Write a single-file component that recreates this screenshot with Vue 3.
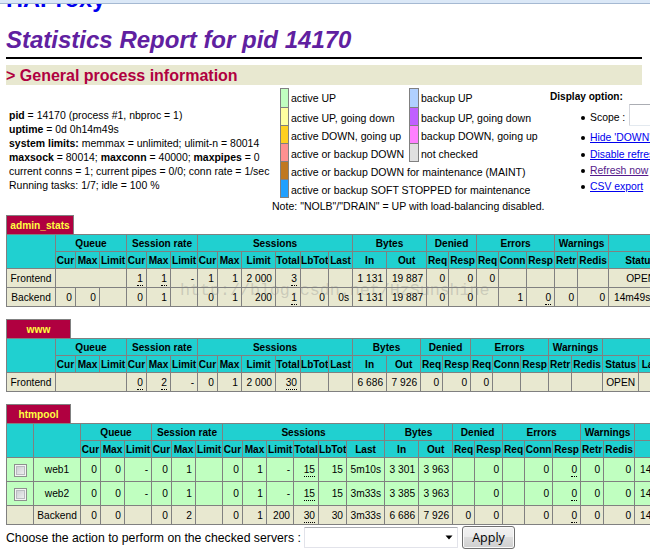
<script setup>
const info = [
  [['b', 'pid'], ['t', ' = 14170 (process #1, nbproc = 1)']],
  [['b', 'uptime'], ['t', ' = 0d 0h14m49s']],
  [['b', 'system limits:'], ['t', ' memmax = unlimited; ulimit-n = 80014']],
  [['b', 'maxsock'], ['t', ' = 80014; '], ['b', 'maxconn'], ['t', ' = 40000; '], ['b', 'maxpipes'], ['t', ' = 0']],
  [['t', 'current conns = 1; current pipes = 0/0; conn rate = 1/sec']],
  [['t', 'Running tasks: 1/7; idle = 100 %']],
]

const legend = [
  ['active3', 'active UP', 'backup3', 'backup UP'],
  ['active2', 'active UP, going down', 'backup2', 'backup UP, going down'],
  ['active1', 'active DOWN, going up', 'backup1', 'backup DOWN, going up'],
  ['active0', 'active or backup DOWN', 'nocheck', 'not checked'],
  ['maint', 'active or backup DOWN for maintenance (MAINT)'],
  ['soft', 'active or backup SOFT STOPPED for maintenance'],
]

const groups = [
  ['Queue', 3], ['Session rate', 3], ['Sessions', 6], ['Bytes', 2],
  ['Denied', 2], ['Errors', 3], ['Warnings', 2],
]
const heads = [
  'Cur', 'Max', 'Limit', 'Cur', 'Max', 'Limit', 'Cur', 'Max', 'Limit', 'Total', 'LbTot', 'Last',
  'In', 'Out', 'Req', 'Resp', 'Req', 'Conn', 'Resp', 'Retr', 'Redis', 'Status',
]

const proxies = [
  {
    name: 'admin_stats',
    cols: [49, 20, 24, 27, 20, 24, 27, 20, 24, 34, 25, 28, 24, 34, 40, 22, 28, 22, 28, 28, 23, 31, 64],
    rows: [
      { type: 'frontend', name: 'Frontend', cells: ['_1', '_1', '-', '1', '1', '2 000', '_3', '', '', '1 131', '19 887', '0', '0', '0', '', '', '', '', 'OPEN'] },
      { type: 'backend', name: 'Backend', cells: ['0', '0', '', '0', '1', '', '0', '1', '200', '_1', '0', '0s', '1 131', '19 887', '0', '0', '', '1', '_0', '0', '0', '14m49s UP'] },
    ],
  },
  {
    name: 'www',
    cols: [49, 20, 24, 27, 20, 24, 27, 20, 24, 34, 25, 28, 24, 34, 34, 22, 28, 22, 28, 28, 23, 31, 36, 46],
    extra: ['LastChk'],
    rows: [
      { type: 'frontend', name: 'Frontend', cells: ['_0', '_2', '-', '0', '1', '2 000', '_30', '', '', '6 686', '7 926', '0', '0', '0', '', '', '', '', 'OPEN', ''] },
    ],
  },
  {
    name: 'htmpool',
    check: true,
    cols: [27, 47, 20, 24, 27, 20, 24, 27, 20, 24, 27, 25, 28, 38, 34, 34, 22, 28, 22, 28, 28, 23, 31, 64],
    rows: [
      { type: 'server', name: 'web1', cells: ['0', '0', '-', '0', '1', '', '0', '1', '-', '_15', '15', '5m10s', '3 301', '3 963', '', '0', '', '0', '_0', '0', '0', '14m49s UP'] },
      { type: 'server', name: 'web2', cells: ['0', '0', '-', '0', '1', '', '0', '1', '-', '_15', '15', '3m33s', '3 385', '3 963', '', '0', '', '0', '_0', '0', '0', '14m49s UP'] },
      { type: 'backend', name: 'Backend', cells: ['0', '0', '', '0', '2', '', '0', '1', '200', '_30', '30', '3m33s', '6 686', '7 926', '0', '0', '', '0', '_0', '0', '0', '14m49s UP'] },
    ],
  },
]

const sum = (list) => list.reduce((a, b) => a + b, 0)
const isState = (c) => c === 'OPEN' || c.endsWith('UP')
</script>

<template>
  <div class="page">
    <div class="chrome"></div>
    <main>
      <h1>HAProxy</h1>
      <h2>Statistics Report for pid 14170</h2>
      <hr />
      <h3>&gt; General process information</h3>

      <section class="general">
        <div class="info">
          <p v-for="(line, i) in info" :key="i"><template v-for="(part, j) in line" :key="j"><b v-if="part[0] === 'b'">{{ part[1] }}</b><span v-else>{{ part[1] }}</span></template></p>
        </div>

        <div class="legend">
          <div v-for="(row, i) in legend" :key="i" class="legend-row">
            <i class="swatch" :class="row[0]"></i>
            <span class="legend-text" :class="{ wide: !row[2] }">{{ row[1] }}</span>
            <template v-if="row[2]">
              <i class="swatch second" :class="row[2]"></i>
              <span class="legend-text">{{ row[3] }}</span>
            </template>
          </div>
          <p class="note">Note: "NOLB"/"DRAIN" = UP with load-balancing disabled.</p>
        </div>

        <div class="options">
          <b>Display option:</b>
          <ul>
            <li class="scope">Scope : <input type="text" /></li>
            <li><a href="#">Hide 'DOWN' servers</a></li>
            <li><a href="#">Disable refresh</a></li>
            <li><a href="#" class="visited">Refresh now</a></li>
            <li><a href="#">CSV export</a></li>
          </ul>
        </div>
      </section>

      <section v-for="p in proxies" :key="p.name" class="proxy">
        <div class="pxname" :class="{ long: p.name.length > 8 }">{{ p.name }}</div>
        <table :style="{ width: sum(p.cols) + 1 + 'px' }">
          <colgroup>
            <col v-for="(w, i) in p.cols" :key="i" :style="{ width: w + 'px' }" />
          </colgroup>
          <thead>
            <tr>
              <th v-if="p.check" rowspan="2"></th>
              <th rowspan="2"></th>
              <th v-for="g in groups" :key="g[0]" :colspan="g[1]">{{ g[0] }}</th>
              <th :colspan="p.extra ? 2 : 1"></th>
            </tr>
            <tr>
              <th v-for="(h, i) in heads" :key="i">{{ h }}</th>
              <th v-for="h in p.extra" :key="h">{{ h }}</th>
            </tr>
          </thead>
          <tbody>
            <tr v-for="row in p.rows" :key="row.name" :class="row.type">
              <td v-if="p.check" class="ac"><input v-if="row.type === 'server'" type="checkbox" /></td>
              <td class="ac">{{ row.name }}</td>
              <td v-if="row.type === 'frontend'" colspan="3"></td>
              <td v-for="(c, i) in row.cells" :key="i" :class="{ ac: isState(c) }">
                <u v-if="c[0] === '_'">{{ c.slice(1) }}</u>
                <template v-else>{{ c }}</template>
              </td>
            </tr>
          </tbody>
        </table>
      </section>

      <form class="action" @submit.prevent>
        <label>Choose the action to perform on the checked servers :</label>
        <div class="select">
          <svg width="8" height="5" viewBox="0 0 8 5"><path d="M0.5 0.5h7L4 4.5z" fill="#000" /></svg>
        </div>
        <button>Apply</button>
      </form>
    </main>
    <div class="watermark">http://blog.csdn.net/HzSunshine</div>
  </div>
</template>

<style>
body {
  margin: 0;
  background: #fff;
}
</style>

<style scoped>
.page {
  position: relative;
  width: 650px;
  height: 559px;
  overflow: hidden;
  background: #fff;
  color: #000;
  font-family: "Liberation Sans", Arial, sans-serif;
  font-size: 10.4px;
}

.chrome {
  position: relative;
  z-index: 1;
  box-sizing: border-box;
  height: 4px;
  background: #dbe8f7;
  border-bottom: 1px solid #a5b9d2;
}

main {
  padding-left: 6px;
}

p, h1, h2, h3, ul {
  margin: 0;
  padding: 0;
}

h1 {
  margin-top: -19px;
  font-size: 23.5px;
  line-height: 28px;
  color: #0000ee;
}

h2 {
  margin-top: 13px;
  font-size: 24px;
  line-height: 28px;
  font-style: italic;
  color: #6020a0;
}

hr {
  width: 636px;
  height: 2px;
  margin: 3px 0 6px;
  border: 0;
  background: #000;
}

h3 {
  box-sizing: border-box;
  width: 636px;
  height: 20px;
  padding-top: 1px;
  font-size: 16px;
  line-height: 20px;
  color: #b00040;
  background: #e8e8d0;
}

.general {
  display: flex;
  width: 760px;
  height: 130px;
}

.info {
  width: 263px;
  padding: 24px 0 0 3px;
  font-size: 10.48px;
  line-height: 14px;
  white-space: pre;
}

.legend {
  width: 278px;
  padding-top: 3px;
  font-size: 10.55px;
  white-space: nowrap;
}

.legend-row {
  display: flex;
  height: 18px;
  margin-left: 8px;
  line-height: 22px;
}

.legend-row:first-child {
  height: 19px;
  line-height: 21px;
}

.swatch {
  box-sizing: border-box;
  width: 9px;
  height: calc(100% + 1px);
  border: 1px solid #808080;
}

.swatch.second {
  width: 10px;
}

.legend-text {
  width: 118px;
  padding-left: 2px;
}

.legend-text.wide {
  width: auto;
}

.active3 { background: #c0ffc0; }
.active2 { background: #ffffa0; }
.active1 { background: #ffd020; }
.active0 { background: #ff9090; }
.maint { background: #c07820; }
.soft { background: #20a0ff; }
.backup3 { background: #b0d0ff; }
.backup2 { background: #c060ff; }
.backup1 { background: #ff80ff; }
.nocheck { background: #e0e0e0; }

.note {
  line-height: 18px;
}

.options {
  padding-top: 5px;
  line-height: 14px;
  white-space: nowrap;
}

.options b {
  font-size: 10.1px;
}

.options ul {
  margin-top: 1px;
  padding-left: 40px;
  list-style: none;
}

.options li {
  display: flex;
  align-items: center;
  height: 16.4px;
}

.options li::before {
  content: "";
  width: 4px;
  height: 4px;
  margin: 0 5px 0 -9px;
  border-radius: 50%;
  background: #000;
}

.options li.scope {
  height: 25px;
  padding-top: 0;
}

.scope input {
  box-sizing: border-box;
  width: 120px;
  height: 22px;
  margin: 0 0 5px 4px;
  border: 1px solid #e3e9ef;
  border-top-color: #abadb3;
  border-left-color: #d4d6dc;
  border-radius: 1px;
}

.options a {
  color: #0000ee;
}

.options a.visited {
  color: #551a8b;
}

.proxy {
  margin-bottom: 12px;
}

.pxname {
  box-sizing: border-box;
  width: 65px;
  height: 19px;
  border: 1px solid #808080;
  border-bottom: 0;
  background: #b00040;
  color: #ffff40;
  font-size: 10.2px;
  font-weight: bold;
  line-height: 20px;
  text-align: center;
}

.pxname.long {
  width: 68px;
}

table {
  table-layout: fixed;
  border-collapse: separate;
  border-spacing: 0;
  border: solid #808080;
  border-width: 1px 0 0 1px;
  box-sizing: border-box;
}

th, td {
  box-sizing: border-box;
  height: 17px;
  padding: 2px 0 0;
  border: solid #808080;
  border-width: 0 1px 1px 0;
  overflow: hidden;
  line-height: 14px;
  white-space: nowrap;
}

th {
  background: #20d0d0;
  font-size: 10.1px;
  text-align: center;
}

td {
  height: 19px;
  padding-right: 3px;
  font-size: 10.2px;
  text-align: right;
}

td.ac {
  padding-right: 0;
  text-align: center;
}

.frontend td, .backend td {
  background: #e8e8d0;
}

.server td {
  height: 24px;
  padding-top: 1px;
  background: #c0ffc0;
}

td u {
  padding-bottom: 1px;
  border-bottom: 1px dotted #000;
  text-decoration: none;
}

input[type="checkbox"] {
  appearance: none;
  box-sizing: border-box;
  display: block;
  width: 13px;
  height: 13px;
  margin: 0 auto;
  border: 1px solid #8e8f8f;
  background: linear-gradient(135deg, #c4c8cc, #f6f6f6);
  box-shadow: inset 0 0 0 1px #f4f4f4, inset 0 0 0 2px #b9bcc0;
}

.action {
  display: flex;
  align-items: flex-start;
  margin-top: -11px;
  font-size: 12.25px;
}

.action label {
  width: 298px;
  line-height: 25px;
  white-space: nowrap;
}

.select {
  box-sizing: border-box;
  display: flex;
  align-items: center;
  justify-content: flex-end;
  width: 154px;
  height: 21px;
  margin: 1px 4px 0 0;
  padding-right: 4px;
  border: 1px solid #e2e3ea;
  border-top-color: #abadb3;
  border-radius: 1px;
}

button {
  box-sizing: border-box;
  width: 53px;
  height: 23px;
  padding: 0;
  border: 1px solid #707070;
  border-radius: 3px;
  background: linear-gradient(#f2f2f2, #ebebeb 50%, #dddddd 50%, #cfcfcf);
  box-shadow: inset 0 0 0 1px #fafafa;
  color: #000;
  font: 12.5px/20px "Open Sans", "Noto Sans", sans-serif;
}

.watermark {
  position: absolute;
  left: 180px;
  top: 279px;
  color: rgba(130, 130, 130, 0.3);
  font-family: "Liberation Mono", monospace;
  font-size: 16.65px;
  line-height: 24px;
  white-space: nowrap;
}
</style>
